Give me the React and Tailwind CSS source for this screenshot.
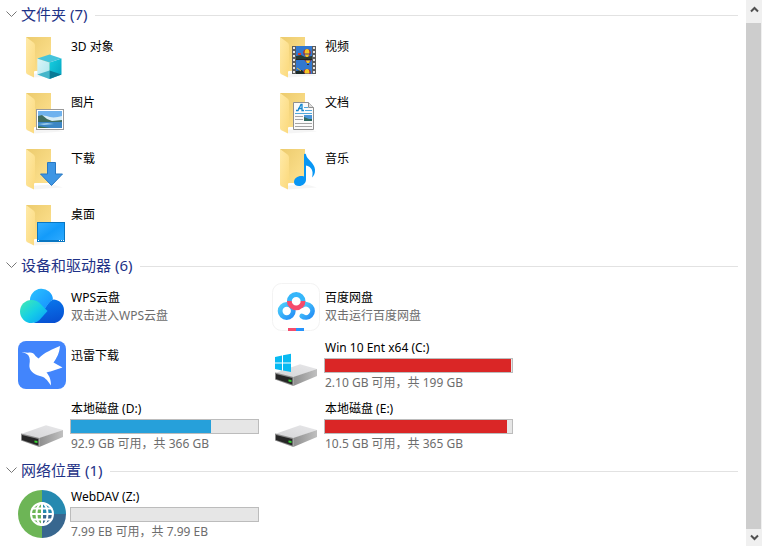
import { useState } from "react";

function FolderIcon({ children }) {
  return (
    <svg viewBox="0 0 48 48" className="size-12 shrink-0" aria-hidden="true">
      <defs>
        <linearGradient id="folderBack" x1="0" y1="0" x2="1" y2="1">
          <stop offset="0" stopColor="#eccb6d" />
          <stop offset="1" stopColor="#ffe392" />
        </linearGradient>
        <linearGradient id="folderFlap" x1="0" y1="0" x2="1" y2="1">
          <stop offset="0" stopColor="#ffeaa8" />
          <stop offset="1" stopColor="#fbd97c" />
        </linearGradient>
      </defs>
      <path d="M8 40l9 3.500 28-2-10-3z" fill="#000" opacity=".04" />
      <path d="M8 3h25v34H16z" fill="url(#folderBack)" />
      <path d="M8 3l7.500 5.500q1.500 1 1.500 3V37l-1 .5v6L9 40q-1-.6-1-2z" fill="url(#folderFlap)" />
      {children}
    </svg>
  );
}

const CubeIcon = () => (
  <FolderIcon>
    <defs>
      <linearGradient id="cubeLeft" x1="0" y1="0" x2="1" y2="1">
        <stop offset="0" stopColor="#dcf5f8" />
        <stop offset="1" stopColor="#a9e6ee" />
      </linearGradient>
      <linearGradient id="cubeRight" x1="0" y1="0" x2="1" y2="1">
        <stop offset="0" stopColor="#18cfe0" />
        <stop offset="1" stopColor="#04a2c0" />
      </linearGradient>
    </defs>
    <path d="M19.300 24.500L31.500 28.500V45l-12.200-4.500z" fill="url(#cubeLeft)" />
    <path d="M31.500 28.500l12-4v16l-12 4.500z" fill="url(#cubeRight)" />
    <path d="M19.300 24.500L31.500 20.500l12 4-12 4z" fill="#45c4db" />
    <path d="M19.300 40.500l12.200-4V45z" fill="#45b6ca" />
    <path d="M43.500 40.500l-12-4V45z" fill="#087a96" />
  </FolderIcon>
);

const PictureIcon = () => (
  <FolderIcon>
    <rect x="18.500" y="19.500" width="27" height="20" fill="#fff" stroke="#9a9a9a" />
    <rect x="20" y="21" width="24" height="17" fill="#6fb2ee" />
    <path d="M20 27c5-3 8-1 12 0s8 0 12-1v6H20z" fill="#d8edf6" />
    <path d="M20 26l4-1 5 4 5 2 10-1v3H20z" fill="#3f6d5f" />
    <path d="M20 32h24v6H20z" fill="#3c86c4" />
    <path d="M20 34l9-1 7 1-10 1z" fill="#9dcdec" />
    <path d="M20 38v-2l12 2z" fill="#3e714f" />
  </FolderIcon>
);

const DownloadIcon = () => (
  <FolderIcon>
    <path d="M29.500 16.500h8V28h7L33.500 39.500 22.500 28h7z" fill="#3e96e4" stroke="#2878c2" />
  </FolderIcon>
);

const DesktopIcon = () => (
  <FolderIcon>
    <defs>
      <linearGradient id="desktopScreen" x1="0" y1="0" x2="1" y2="1">
        <stop offset="0" stopColor="#36b0ff" />
        <stop offset=".5" stopColor="#139bfa" />
        <stop offset="1" stopColor="#30abff" />
      </linearGradient>
    </defs>
    <rect x="19.500" y="20.500" width="27" height="19" fill="url(#desktopScreen)" stroke="#0876c2" />
    <path d="M20 38.500h26" stroke="#0876c2" />
    <path d="M20 38.500h1M41 38.500h1M43 38.500h1M45 38.500h1" stroke="#fff" />
  </FolderIcon>
);

function Balloon({ x, y }) {
  return (
    <g transform={`translate(${x} ${y})`}>
      <path d="M0 0c4 0 5 4 2 7l-1 1h-2l-1-1C-5 4-4 0 0 0z" fill="#b5282b" />
      <path d="M0 0c3 0 3 5 1 8h-2C-3 5-3 0 0 0z" fill="#f2c926" />
      <path d="M-3.500 5h7" stroke="#4a3a86" />
      <path d="M-1 9h2v1h-2z" fill="#402b1b" />
    </g>
  );
}

const VideoIcon = () => (
  <FolderIcon>
    <rect x="20" y="12" width="24" height="28" fill="#5c5c5c" />
    <rect x="24" y="12" width="16" height="28" fill="#3278cf" />
    <path d="M22 13v27M42 13v27" stroke="#e4e4e4" strokeWidth="2" strokeDasharray="2 2" />
    <svg x="24" y="12" width="16" height="13" viewBox="0 0 16 13">
      <path d="M0 10l5-1 4 2 7-1v3H0z" fill="#293d35" />
      <Balloon x={11} y={3} />
      <path d="M2 7h3v2H2z" fill="#df3c29" />
    </svg>
    <svg x="24" y="26" width="16" height="14" viewBox="0 0 16 14">
      <Balloon x={12} y={-5} />
      <Balloon x={11} y={9} />
      <path d="M0 11l6-1 3 4H0z" fill="#1c2b29" />
      <path d="M1 8l4 3" stroke="#ddb631" />
    </svg>
    <path d="M24 25.500h16" stroke="#242424" />
  </FolderIcon>
);

const DocumentIcon = () => (
  <FolderIcon>
    <path d="M21.500 12.500h15l5 5v22h-20z" fill="#fafafa" stroke="#8f8f8f" />
    <path d="M36.500 12.500v5h5" fill="#ddd" stroke="#8f8f8f" />
    <path d="M24 20.500h2l3-6h1v6h2M26 18.500h4" fill="none" stroke="#1688d0" strokeWidth="1.300" />
    <path d="M32 17.500h4M33 20.500h7M23 23.500h17" stroke="#52a8da" />
    <path d="M23 26.500h8M23 29.500h8M23 33.500h17M23 36.500h17" stroke="#a5a5a5" />
    <rect x="32" y="25" width="8" height="6" fill="#4b96d8" />
    <path d="M32 27l5 2h3v2h-8z" fill="#306a60" />
  </FolderIcon>
);

const MusicIcon = () => (
  <FolderIcon>
    <path
      d="M32 8.500c0-1 2-1 2 0 .5 5 8.500 8 9 15 .2 4-1 6-3 8 2-7-1-11-6-12v14c0 4-3.500 6.500-7 6.500-3 0-5-1.500-5-4 0-4 5-7 10-5.500z"
      fill="#0896f4"
    />
  </FolderIcon>
);

const WpsCloudIcon = () => (
  <svg viewBox="0 0 48 48" className="size-12 shrink-0" aria-hidden="true">
    <defs>
      <linearGradient id="wpsTop" x1="0" y1="0" x2="1" y2="1">
        <stop offset="0" stopColor="#2bc3ff" />
        <stop offset="1" stopColor="#138aff" />
      </linearGradient>
      <linearGradient id="wpsRight" x1=".3" y1="0" x2=".6" y2="1">
        <stop offset="0" stopColor="#0878ed" />
        <stop offset="1" stopColor="#0750d2" />
      </linearGradient>
      <linearGradient id="wpsLeft" x1="0" y1="0" x2="1" y2="1">
        <stop offset="0" stopColor="#45ebb0" />
        <stop offset=".5" stopColor="#16cfe5" />
        <stop offset="1" stopColor="#089bfd" />
      </linearGradient>
    </defs>
    <path d="M16 40l11-15c2-3 5-8.500 9-8.500A11 11 0 0146 28.500 11.500 11.500 0 0134.500 40z" fill="url(#wpsRight)" />
    <path d="M12 18a11.500 11.500 0 0123-1.500c-5 2-7 10-12 14z" fill="url(#wpsTop)" />
    <path d="M13.500 17c4 0 6.500 1.500 9 4l7 7-8 9c-2 2-4.500 3-8 3a11.500 11.500 0 010-23z" fill="url(#wpsLeft)" />
  </svg>
);

const ThunderIcon = () => (
  <svg viewBox="0 0 48 48" className="size-12 shrink-0" aria-hidden="true">
    <rect width="48" height="48" rx="8" fill="#4285fc" />
    <path
      d="M3.500 11l6.500.8c3-.8 6 .2 7.500 3.200l3 2.500C27 11 34 8.500 42 5c-.5 7-3.500 12.500-6.500 16.500l9 5-12 4c-2 .5-3 .8-4 1 3 3.500 4.500 7 4.500 13-4-6-6.500-8.500-11-9.500-7-2-11.500-6-10.500-12 .5-3 .5-6-1-8.500-1-1.500-3.500-2.500-7-3.500z"
      fill="#fff"
    />
  </svg>
);

const BaiduIcon = () => (
  <svg viewBox="0 0 48 48" className="size-12 shrink-0" aria-hidden="true">
    <defs>
      <linearGradient id="baiduBlue" x1="0" y1="0" x2="1" y2="1">
        <stop offset="0" stopColor="#4dcdfb" />
        <stop offset="1" stopColor="#238ef6" />
      </linearGradient>
    </defs>
    <rect x=".5" y=".5" width="47" height="47" rx="9" fill="#fff" stroke="#f3f3f3" />
    <g fill="none" strokeWidth="4.800">
      <circle cx="14.700" cy="28" r="6.600" stroke="url(#baiduBlue)" />
      <path d="M30 22.500a6.600 6.600 0 11-.2 10.500" stroke="url(#baiduBlue)" strokeLinecap="round" />
      <path d="M17.300 18.400a6.900 6.900 0 0113.800 0" stroke="#35b6fa" />
      <path d="M17.300 18a6.900 6.900 0 0013.800 0" stroke="#f54b6c" />
    </g>
    <path d="M16 45h8v3h-8z" fill="#f54b6c" />
    <path d="M24 45h8v3h-8z" fill="#2693fb" />
  </svg>
);

function DriveIcon({ system }) {
  return (
    <svg viewBox="0 0 48 48" className="size-12 shrink-0" aria-hidden="true">
      <defs>
        <linearGradient id="driveSide" x1="0" y1="0" x2="1" y2="0">
          <stop offset="0" stopColor="#8e8e8e" />
          <stop offset="1" stopColor="#c0c0c0" />
        </linearGradient>
        <linearGradient id="driveTop" x1="0" y1="1" x2="1" y2="0">
          <stop offset="0" stopColor="#d5d5d7" />
          <stop offset="1" stopColor="#e7e7e9" />
        </linearGradient>
      </defs>
      <path d="M3 32L28 23.300 45 28 21.300 36.500z" fill="url(#driveTop)" />
      <path d="M21.300 36L45 28v7L21.300 45z" fill="url(#driveSide)" />
      <path d="M3 31.500l18.300 4.500v9L3 38.500z" fill="#8b8b8b" />
      <path d="M4 33l16.300 4v6.500L4 38z" fill="#262626" />
      <path d="M16.500 38.500l3 .6v2l-3-.6z" fill="#37d532" />
      {system && (
        <path d="M3 16l7-1.500v7H3zM11 14.200l8-1.400v8.700h-8zM3 22.500h7v7L3 28zM11 22.500h8v8.500l-8-1.400z" fill="#08baf2" />
      )}
    </svg>
  );
}

const WebDavIcon = () => (
  <svg viewBox="0 0 48 48" className="size-12 shrink-0" aria-hidden="true">
    <path d="M24 0a24 24 0 000 48z" fill="#6db556" />
    <path d="M24 0a24 24 0 0124 24H24z" fill="#2589b0" />
    <path d="M48 24a24 24 0 01-24 24V24z" fill="#38678f" />
    <g fill="none" stroke="#fff" strokeWidth="2">
      <circle cx="24" cy="24" r="11" />
      <ellipse cx="24" cy="24" rx="5.500" ry="11" />
      <path d="M24 13v22M13 24h22M14.500 18.500h19M14.500 29.500h19" />
    </g>
  </svg>
);

function Section({ title, children }) {
  const [open, setOpen] = useState(true);
  return (
    <section>
      <h2 className="flex h-6 items-center gap-2 pl-1.5 text-[15px] leading-6 text-[#1e3287]">
        <button
          type="button"
          aria-expanded={open}
          onClick={() => setOpen(!open)}
          className="flex items-center gap-1 pb-0.5 whitespace-nowrap"
        >
          <svg viewBox="0 0 11 7" className="h-[7px] w-[11px]" fill="none" stroke="#777" aria-hidden="true">
            <path d="M.5.5l5 5 5-5" />
          </svg>
          {title}
        </button>
        <span className="h-px flex-1 bg-[#e2e2e2]" />
      </h2>
      {open && children}
    </section>
  );
}

const grid = "grid grid-cols-[254px_254px] pl-[18px]";

function Folder({ icon, name }) {
  return (
    <li className="flex h-14 gap-[5px] py-1">
      {icon}
      <span className="pt-1">{name}</span>
    </li>
  );
}

function Place({ icon, name, note }) {
  return (
    <li className="flex h-[58px] items-center gap-[5px]">
      {icon}
      <div className="h-9">
        <p>{name}</p>
        {note && <p className="text-[#6d6d6d]">{note}</p>}
      </div>
    </li>
  );
}

function Drive({ icon, name, note, used, low }) {
  return (
    <li className="flex min-h-[58px] items-center gap-1">
      {icon}
      <div className="w-[189px] pt-px">
        <p className="px-px">{name}</p>
        <div
          role="meter"
          aria-label={name}
          aria-valuemin={0}
          aria-valuemax={100}
          aria-valuenow={used}
          className="my-px h-[15px] border border-[#bcbcbc] bg-[#e6e6e6]"
        >
          <div className={low ? "h-full bg-[#da2626]" : "h-full bg-[#26a0da]"} style={{ width: `${used}%` }} />
        </div>
        <p className="px-px text-[#6d6d6d]">{note}</p>
      </div>
    </li>
  );
}

export default function App() {
  return (
    <div className="flex min-h-screen bg-white pr-px font-['Noto_Sans','Noto_Sans_CJK_SC',sans-serif] text-xs leading-[18px] text-black">
      <main className="min-w-0 flex-1 pt-[3px] pr-2">
        <Section title="文件夹 (7)">
          <ul className={`${grid} pt-[3px]`}>
            <Folder icon={<CubeIcon />} name="3D 对象" />
            <Folder icon={<VideoIcon />} name="视频" />
            <Folder icon={<PictureIcon />} name="图片" />
            <Folder icon={<DocumentIcon />} name="文档" />
            <Folder icon={<DownloadIcon />} name="下载" />
            <Folder icon={<MusicIcon />} name="音乐" />
            <Folder icon={<DesktopIcon />} name="桌面" />
          </ul>
        </Section>
        <Section title="设备和驱动器 (6)">
          <ul className={`${grid} grid-rows-[58px_58px_64px] pb-px`}>
            <Place icon={<WpsCloudIcon />} name="WPS云盘" note="双击进入WPS云盘" />
            <Place icon={<BaiduIcon />} name="百度网盘" note="双击运行百度网盘" />
            <Place icon={<ThunderIcon />} name="迅雷下载" />
            <Drive icon={<DriveIcon system />} name="Win 10 Ent x64 (C:)" note="2.10 GB 可用，共 199 GB" used={99.5} low />
            <Drive icon={<DriveIcon />} name="本地磁盘 (D:)" note="92.9 GB 可用，共 366 GB" used={75} />
            <Drive icon={<DriveIcon />} name="本地磁盘 (E:)" note="10.5 GB 可用，共 365 GB" used={97.5} low />
          </ul>
        </Section>
        <Section title="网络位置 (1)">
          <ul className={`${grid} grid-rows-[62px]`}>
            <Drive icon={<WebDavIcon />} name="WebDAV (Z:)" note="7.99 EB 可用，共 7.99 EB" used={0} />
          </ul>
        </Section>
      </main>
      <div className="mb-px flex w-4 shrink-0 flex-col bg-[#f0f0f0]">
        <button type="button" aria-label="向上滚动" className="flex h-[23px] items-center justify-center pb-1">
          <svg viewBox="0 0 9 7" className="h-[7px] w-[9px]" fill="none" stroke="#505050" strokeWidth="2" aria-hidden="true">
            <path d="M1 5.500L4.500 2 8 5.500" />
          </svg>
        </button>
        <div className="w-[15px] flex-1 bg-[#cdcdcd]" />
        <button type="button" aria-label="向下滚动" className="flex h-[17px] items-center justify-center">
          <svg viewBox="0 0 9 7" className="h-[7px] w-[9px]" fill="none" stroke="#505050" strokeWidth="2" aria-hidden="true">
            <path d="M1 1.500L4.500 5 8 1.500" />
          </svg>
        </button>
      </div>
    </div>
  );
}
